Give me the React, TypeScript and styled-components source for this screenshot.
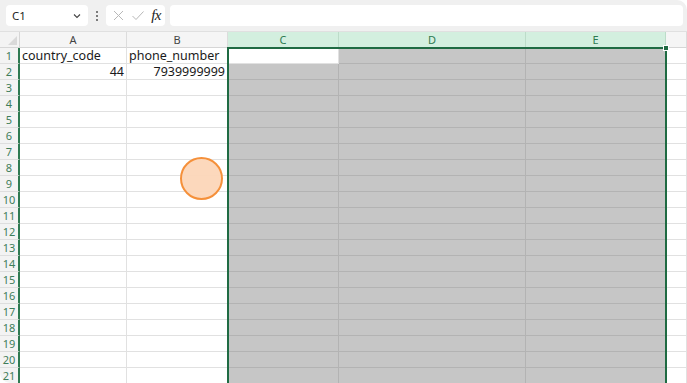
import React from "react";
import styled, { createGlobalStyle } from "styled-components";

const GlobalStyle = createGlobalStyle`
  html, body {
    margin: 0;
    padding: 0;
    background: #ffffff;
  }
  * {
    box-sizing: border-box;
  }
`;

const COLS = [
  { key: "A", width: 107 },
  { key: "B", width: 101 },
  { key: "C", width: 111 },
  { key: "D", width: 187 },
  { key: "E", width: 140 },
  { key: "F", width: 21 },
];
const SELECTED = ["C", "D", "E"];
const ROW_COUNT = 21;

const data: Record<string, { text: string; align: "left" | "right" }> = {
  A1: { text: "country_code", align: "left" },
  B1: { text: "phone_number", align: "left" },
  A2: { text: "44", align: "right" },
  B2: { text: "7939999999", align: "right" },
};

const Window = styled.div`
  position: relative;
  width: 687px;
  height: 383px;
  overflow: hidden;
  background: #ffffff;
  font-family: "Noto Sans", "Open Sans", sans-serif;
  border-radius: 0 10px 0 10px;
`;

const Toolbar = styled.div`
  height: 32px;
  display: flex;
  align-items: center;
  gap: 5px;
  padding: 0 4px 0 6px;
  background: #f0f0f0;
  border-bottom: 1px solid #e0e0e0;
`;

const NameBox = styled.div`
  width: 82px;
  height: 21px;
  display: flex;
  align-items: center;
  justify-content: space-between;
  padding: 0 6px 0 6px;
  background: #ffffff;
  border-radius: 4px;
  font-size: 11.5px;
  color: #262626;
`;

const Dots = styled.div`
  width: 8px;
  display: flex;
  flex-direction: column;
  align-items: center;
  gap: 2px;
  span {
    width: 2px;
    height: 2px;
    border-radius: 50%;
    background: #555;
  }
`;

const FxGroup = styled.div`
  width: 59px;
  height: 21px;
  display: flex;
  align-items: center;
  justify-content: space-between;
  padding: 0 4px 0 6px;
  background: #ffffff;
  border-radius: 4px;
`;

const FxLabel = styled.span`
  font-family: "Liberation Serif", "DejaVu Serif", serif;
  font-style: italic;
  font-size: 15px;
  color: #222;
  line-height: 1;
  letter-spacing: -0.5px;
`;

const FormulaInput = styled.div`
  flex: 1;
  height: 21px;
  background: #ffffff;
  border-radius: 4px;
`;

const SheetArea = styled.div`
  position: relative;
`;

const Grid = styled.div`
  display: grid;
  grid-template-columns: 20px ${COLS.map((c) => `${c.width}px`).join(" ")};
  grid-auto-rows: 16px;
`;

const Corner = styled.div`
  position: relative;
  background: #f3f3f3;
  border-right: 1px solid #d6d6d6;
  border-bottom: 1px solid #d6d6d6;
  svg {
    position: absolute;
    right: 2px;
    bottom: 2px;
  }
`;

const ColHeader = styled.div<{ $selected: boolean }>`
  display: flex;
  align-items: center;
  justify-content: center;
  font-size: 11px;
  background: ${(p) => (p.$selected ? "#d3efdf" : "#f5f5f5")};
  color: ${(p) => (p.$selected ? "#2f7a52" : "#444")};
  border-right: 1px solid ${(p) => (p.$selected ? "#bcdcc9" : "#dcdcdc")};
  border-bottom: 1px solid ${(p) => (p.$selected ? "#217346" : "#d6d6d6")};
`;

const RowHeader = styled.div`
  display: flex;
  align-items: center;
  justify-content: center;
  font-size: 11px;
  color: #3e7d5a;
  background: #f3f3f3;
  border-bottom: 1px solid #dedede;
  border-right: 2px solid #2f7a52;
`;

const Cell = styled.div<{ $shade: boolean; $align: "left" | "right" }>`
  display: flex;
  align-items: center;
  justify-content: ${(p) => (p.$align === "right" ? "flex-end" : "flex-start")};
  padding: 0 2px 0 2px;
  font-size: 12.5px;
  color: #1a1a1a;
  white-space: nowrap;
  overflow: visible;
  background: ${(p) => (p.$shade ? "#c6c6c6" : "#ffffff")};
  border-right: 1px solid ${(p) => (p.$shade ? "#b3b3b3" : "#e1e1e1")};
  border-bottom: 1px solid ${(p) => (p.$shade ? "#b3b3b3" : "#e1e1e1")};
`;

const Selection = styled.div`
  position: absolute;
  left: 227px;
  top: 15px;
  width: 440px;
  height: 400px;
  border: 2px solid #1f6b43;
  pointer-events: none;
`;

const FillHandle = styled.div`
  position: absolute;
  left: 663px;
  top: 13px;
  width: 6px;
  height: 6px;
  background: #1f6b43;
  border: 1px solid #ffffff;
`;

const ClickMarker = styled.div`
  position: absolute;
  left: 180px;
  top: 125px;
  width: 43px;
  height: 43px;
  border-radius: 50%;
  background: rgba(252, 214, 184, 0.95);
  border: 2px solid #f5903a;
`;

const App: React.FC = () => {
  const rows = Array.from({ length: ROW_COUNT }, (_, i) => i + 1);

  return (
    <>
      <GlobalStyle />
      <Window>
        <Toolbar>
          <NameBox>
            C1
            <svg width="10" height="10" viewBox="0 0 10 10">
              <path d="M2 3.5 L5 6.5 L8 3.5" fill="none" stroke="#444" strokeWidth="1.1" />
            </svg>
          </NameBox>
          <Dots>
            <span />
            <span />
            <span />
          </Dots>
          <FxGroup>
            <svg width="13" height="13" viewBox="0 0 13 13">
              <path d="M2 2 L11 11 M11 2 L2 11" stroke="#b8b8b8" strokeWidth="1" />
            </svg>
            <svg width="14" height="13" viewBox="0 0 14 13">
              <path d="M1.5 7 L5 10.5 L12.5 2.5" fill="none" stroke="#b8b8b8" strokeWidth="1" />
            </svg>
            <FxLabel>fx</FxLabel>
          </FxGroup>
          <FormulaInput />
        </Toolbar>

        <SheetArea>
          <Grid>
            <Corner>
              <svg width="9" height="9" viewBox="0 0 9 9">
                <path d="M9 0 L9 9 L0 9 Z" fill="#d9d9d9" />
              </svg>
            </Corner>
            {COLS.map((c) => (
              <ColHeader key={c.key} $selected={SELECTED.includes(c.key)}>
                {c.key === "F" ? "" : c.key}
              </ColHeader>
            ))}
            {rows.map((r) => (
              <React.Fragment key={r}>
                <RowHeader>{r}</RowHeader>
                {COLS.map((c) => {
                  const id = `${c.key}${r}`;
                  const cell = data[id];
                  const shade = SELECTED.includes(c.key) && id !== "C1";
                  return (
                    <Cell key={id} $shade={shade} $align={cell ? cell.align : "left"}>
                      {cell ? cell.text : ""}
                    </Cell>
                  );
                })}
              </React.Fragment>
            ))}
          </Grid>
          <Selection />
          <FillHandle />
          <ClickMarker />
        </SheetArea>
      </Window>
    </>
  );
};

export default App;
